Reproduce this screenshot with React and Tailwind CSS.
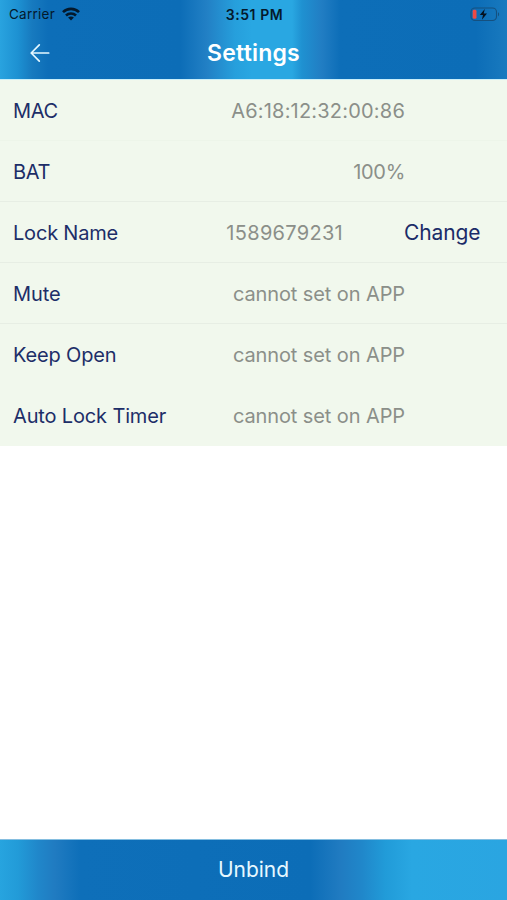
import React from 'react';

const rows = [
  { label: 'MAC', value: 'A6:18:12:32:00:86', labelStyle: 'tracking-[-0.4px]', valueStyle: 'tracking-[0.2px]', line: 'border-[#edf5e9]' },
  { label: 'BAT', value: '100%', labelStyle: 'tracking-[-0.4px]', valueStyle: 'tracking-[-0.3px]', line: 'border-[#e7eee4]' },
  { label: 'Lock Name', value: '1589679231', action: 'Change', labelStyle: 'tracking-[-0.2px]', valueStyle: 'tracking-[0.3px]', line: 'border-[#e7eee4]' },
  { label: 'Mute', value: 'cannot set on APP', labelStyle: 'tracking-[-0.1px]', valueStyle: 'tracking-[-0.1px]', line: 'border-[#e7eee4]' },
  { label: 'Keep Open', value: 'cannot set on APP', labelStyle: 'tracking-[-0.15px]', valueStyle: 'tracking-[-0.1px]', line: 'border-transparent' },
  { label: 'Auto Lock Timer', value: 'cannot set on APP', labelStyle: 'tracking-[-0.15px]', valueStyle: 'tracking-[-0.1px]', line: 'border-transparent' },
];

const WifiIcon = () => (
  <svg width="18" height="14" viewBox="0 0 18 14" fill="none" stroke="#04192c" strokeWidth="2.6">
    <path d="M1 5.2C5.4 .8 12.6 .8 17 5.2" />
    <path d="M4 8.5C6.8 5.8 11.2 5.8 14 8.5" />
    <path d="M9 13.4L6.1 10.6C7.8 9.2 10.2 9.2 11.9 10.6Z" fill="#04192c" stroke="none" />
  </svg>
);

const BatteryIcon = () => (
  <svg width="30" height="15" viewBox="0 0 30 15" fill="none">
    <rect x="1" y="1" width="25.5" height="12.5" rx="4" stroke="#15507f" strokeWidth="1.1" />
    <path d="M28 5.2C29.5 5.7 29.5 8.8 28 9.3Z" fill="#15507f" />
    <rect x="2.7" y="2.8" width="3.8" height="9" rx="1.4" fill="#ed4a45" />
    <path d="M14.8 2L9.8 8H13L11.9 12.7L17 6.5H13.7Z" fill="#04111f" />
  </svg>
);

const BackIcon = () => (
  <svg width="20" height="20" viewBox="0 0 20 20" fill="none" stroke="#e4f7ff" strokeWidth="1.7" strokeLinecap="round" strokeLinejoin="round">
    <path d="M18.7 10H1.2M9.3 1.8L1.2 10L9.3 18.2" />
  </svg>
);

const App = () => {
  return (
    <div className="flex h-[900px] w-[507px] flex-col overflow-hidden bg-white font-['Inter',sans-serif]">
      {/* Header */}
      <header className="h-[80px] shrink-0 border-b border-[#c9effa] bg-[linear-gradient(90deg,#29a3df_0px,#1d91d2_18px,#177abf_32px,#0d6eb8_48px,#0c6db7_180px,#2280c5_207px,#269fdc_235px,#29a7e2_252px,#29a7e2_292px,#1f91d1_302px,#217dc3_322px,#0d6eb8_340px,#0c6db7_476px,#197abf_507px)]">
        <div className="grid h-[28px] grid-cols-[1fr_auto_1fr] items-center pl-[9px] pr-[7px] text-[#04192c]">
          <div className="flex items-center gap-[7px]">
            <span className="text-[13.5px] tracking-[0.25px]">Carrier</span>
            <WifiIcon />
          </div>
          <span className="text-center text-[14px] font-semibold tracking-[0.55px]">3:51 PM</span>
          <div className="flex justify-end">
            <BatteryIcon />
          </div>
        </div>
        <div className="grid h-[49px] grid-cols-3 items-center">
          <div className="pl-[30px]">
            <BackIcon />
          </div>
          <h1 className="pt-px text-center text-[23px] font-semibold tracking-[0.2px] text-white">Settings</h1>
        </div>
      </header>

      {/* Settings list */}
      <main className="flex-1 text-[20px]">
        {rows.map(row => (
          <div key={row.label} className={`flex h-[61px] items-center border-b bg-[#f1f8ed] pl-[13px] pr-[26px] pt-[2px] ${row.line}`}>
            <span className={`shrink-0 text-[#1d2e68] ${row.labelStyle}`}>{row.label}</span>
            <span className={`flex-1 text-right text-[#8b8f89] ${row.valueStyle} ${row.action ? '' : 'pr-[76px]'}`}>{row.value}</span>
            {row.action && (
              <button className="ml-[61px] w-[77px] whitespace-nowrap text-left text-[21px] tracking-[-0.1px] text-[#1b2c68]">{row.action}</button>
            )}
          </div>
        ))}
      </main>

      <button className="h-[61px] shrink-0 border-t border-[#85bee0] bg-[linear-gradient(90deg,#27a4df_0px,#229bd8_18px,#2087ca_38px,#207bc1_55px,#0e6fb9_80px,#0c6db7_310px,#207bc1_340px,#2087ca_362px,#219bd8_385px,#29a7e2_412px,#2aa5e1_507px)] text-[21px] text-[#e6f8ff]">
        Unbind
      </button>
    </div>
  );
};

export default App;
